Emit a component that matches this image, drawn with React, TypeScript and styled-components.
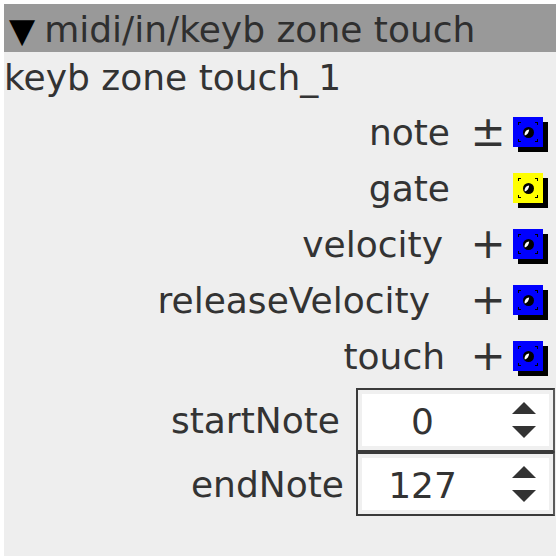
import React from 'react';
import styled, { createGlobalStyle } from 'styled-components';

const GlobalStyle = createGlobalStyle`
  html, body {
    margin: 0;
    padding: 0;
    background: #ffffff;
  }
  body {
    padding: 4px;
    font-family: 'DejaVu Sans', 'Liberation Sans', sans-serif;
  }
`;

const Panel = styled.div`
  width: 552px;
  height: 552px;
  background: #eeeeee;
  color: #333333;
  font-size: 36px;
  display: flex;
  flex-direction: column;
  box-sizing: border-box;
`;

const Header = styled.div`
  height: 48px;
  background: #999999;
  display: flex;
  align-items: center;
  padding: 3px 0 0 5px;
  box-sizing: border-box;
  white-space: nowrap;
  color: #2f2f2f;

  .arrow {
    color: #000;
    font-size: 34px;
    margin-right: 9px;
  }
`;

const InstanceName = styled.div`
  height: 52px;
  line-height: 52px;
  padding-left: 0;
  white-space: nowrap;
`;

const Row = styled.div`
  height: 56px;
  display: flex;
  align-items: center;
  justify-content: flex-end;
  padding-right: 13px;
`;

const Label = styled.span<{ $trail: number }>`
  padding-right: ${(p) => p.$trail}px;
  white-space: nowrap;
`;

const Sign = styled.span`
  width: 36px;
  font-size: 42px;
  line-height: 42px;
  text-align: center;
  margin-right: 7px;
`;

const JackBox = styled.div<{ $color: string }>`
  width: 30px;
  height: 30px;
  background: ${(p) => p.$color};
  box-shadow: 5px 5px 0 #000;
  display: flex;
`;

const ParamRow = styled.div`
  height: 64px;
  display: flex;
  align-items: center;
  justify-content: flex-end;
  padding-right: 1px;
`;

const ParamLabel = styled.span<{ $trail: number }>`
  padding-right: ${(p) => p.$trail}px;
  white-space: nowrap;
`;

const Spinner = styled.div`
  width: 199px;
  height: 64px;
  box-sizing: border-box;
  border: 2px solid #3a3a3a;
  border-right-color: #5a5a5a;
  background: #ffffff;
  box-shadow: inset 0 0 0 4px #f0f0f0;
  display: flex;
  align-items: center;
`;

const SpinValue = styled.span`
  flex: 1;
  text-align: center;
  padding-top: 2px;
`;

const SpinArrows = styled.div`
  width: 66px;
  box-sizing: border-box;
  padding-left: 8px;
  display: flex;
  flex-direction: column;
  align-items: center;
  gap: 12px;
`;

const Jack = ({ color }: { color: string }) => (
  <JackBox $color={color}>
    <svg width="30" height="30" viewBox="0 0 30 30">
      <g fill="#000">
        <path d="M5 5h3v1H6v2H5z" />
        <path d="M25 5h-3v1h2v2h1z" />
        <path d="M5 25h3v-1H6v-2H5z" />
        <path d="M25 25h-3v-1h2v-2h1z" />
      </g>
      <circle cx="15.5" cy="15.5" r="5.5" fill="#000" />
      <path d="M11.8 18.6 C11 16 12.6 12.6 16.2 12.4 C16 15.4 14.2 17.8 11.8 18.6 Z" fill="#fff" />
    </svg>
  </JackBox>
);

const Arrow = ({ up }: { up?: boolean }) => (
  <svg width="24" height="12" viewBox="0 0 24 12">
    <path d={up ? 'M12 0 L24 12 L0 12 Z' : 'M0 0 L24 0 L12 12 Z'} fill="#333" />
  </svg>
);

const outlets = [
  { name: 'note', sign: '±', color: '#0000ff', trail: 20 },
  { name: 'gate', sign: '', color: '#ffff00', trail: 20 },
  { name: 'velocity', sign: '+', color: '#0000ff', trail: 27 },
  { name: 'releaseVelocity', sign: '+', color: '#0000ff', trail: 40 },
  { name: 'touch', sign: '+', color: '#0000ff', trail: 25 },
];

const params = [
  { name: 'startNote', value: 0, trail: 16 },
  { name: 'endNote', value: 127, trail: 12 },
];

const Outlets = styled.div`
  display: flex;
  flex-direction: column;
  margin-bottom: 4px;
`;

export default function App() {
  return (
    <>
      <GlobalStyle />
      <Panel>
        <Header>
          <span className="arrow">▼</span>
          midi/in/keyb zone touch
        </Header>
        <InstanceName>keyb zone touch_1</InstanceName>
        <Outlets>
          {outlets.map((o) => (
            <Row key={o.name}>
              <Label $trail={o.trail}>{o.name}</Label>
              <Sign>{o.sign}</Sign>
              <Jack color={o.color} />
            </Row>
          ))}
        </Outlets>
        {params.map((p) => (
          <ParamRow key={p.name}>
            <ParamLabel $trail={p.trail}>{p.name}</ParamLabel>
            <Spinner>
              <SpinValue>{p.value}</SpinValue>
              <SpinArrows>
                <Arrow up />
                <Arrow />
              </SpinArrows>
            </Spinner>
          </ParamRow>
        ))}
      </Panel>
    </>
  );
}
